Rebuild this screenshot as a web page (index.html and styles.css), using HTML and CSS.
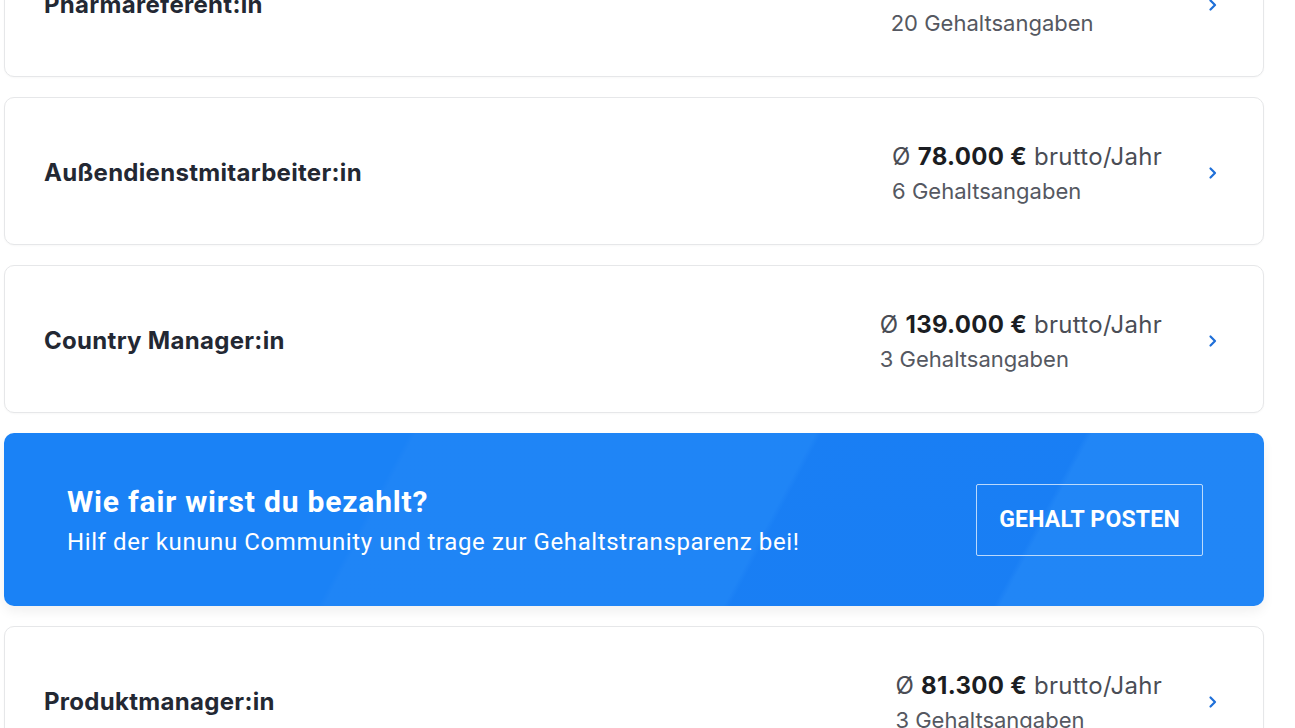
FILE: index.html
```html
<!doctype html>
<html lang="de">
<head>
    <meta charset="UTF-8">
    <meta name="viewport" content="width=device-width, initial-scale=1.0">
    <title>Gehälter</title>
    <link rel="stylesheet" href="styles.css">
</head>
<body>
<div class="list">
    <a class="job" href="#">
        <span class="job-title">Pharmareferent:in</span>
        <span class="stats">
            <span class="price">Ø <b>92.600 €</b> brutto/Jahr</span>
            <span class="count">20 Gehaltsangaben</span>
        </span>
        <span class="chev"><svg width="10" height="14" viewBox="0 0 10 14"><path d="M2.5 2.5 L7 7 L2.5 11.5" fill="none" stroke="#1f6fd8" stroke-width="2.2" stroke-linecap="round" stroke-linejoin="round"/></svg></span>
    </a>
    <a class="job" href="#">
        <span class="job-title">Außendienstmitarbeiter:in</span>
        <span class="stats">
            <span class="price">Ø <b>78.000 €</b> brutto/Jahr</span>
            <span class="count">6 Gehaltsangaben</span>
        </span>
        <span class="chev"><svg width="10" height="14" viewBox="0 0 10 14"><path d="M2.5 2.5 L7 7 L2.5 11.5" fill="none" stroke="#1f6fd8" stroke-width="2.2" stroke-linecap="round" stroke-linejoin="round"/></svg></span>
    </a>
    <a class="job" href="#">
        <span class="job-title">Country Manager:in</span>
        <span class="stats">
            <span class="price">Ø <b>139.000 €</b> brutto/Jahr</span>
            <span class="count">3 Gehaltsangaben</span>
        </span>
        <span class="chev"><svg width="10" height="14" viewBox="0 0 10 14"><path d="M2.5 2.5 L7 7 L2.5 11.5" fill="none" stroke="#1f6fd8" stroke-width="2.2" stroke-linecap="round" stroke-linejoin="round"/></svg></span>
    </a>
    <div class="banner">
        <div class="banner-text">
            <h2>Wie fair wirst du bezahlt?</h2>
            <p>Hilf der kununu Community und trage zur Gehaltstransparenz bei!</p>
        </div>
        <a class="banner-btn" href="#">GEHALT POSTEN</a>
    </div>
    <a class="job" href="#">
        <span class="job-title">Produktmanager:in</span>
        <span class="stats">
            <span class="price">Ø <b>81.300 €</b> brutto/Jahr</span>
            <span class="count">3 Gehaltsangaben</span>
        </span>
        <span class="chev"><svg width="10" height="14" viewBox="0 0 10 14"><path d="M2.5 2.5 L7 7 L2.5 11.5" fill="none" stroke="#1f6fd8" stroke-width="2.2" stroke-linecap="round" stroke-linejoin="round"/></svg></span>
    </a>
</div>
</body>
</html>
```

FILE: styles.css
```css
*{
    margin: 0;
    padding: 0;
    box-sizing: border-box;
}
body{
    background-color: #ffffff;
    font-family: Inter, "Noto Sans", sans-serif;
    overflow: hidden;
}

.list{
    width: 1260px;
    margin: -71px 0 0 4px;
    display: flex;
    flex-direction: column;
    gap: 20px;
}

.job{
    display: flex;
    align-items: center;
    height: 148px;
    padding: 3px 45px 0 39px;
    border: 1px solid #e6e7e9;
    border-radius: 10px;
    background: #fff;
    text-decoration: none;
    box-shadow: 0 1px 2px rgba(0,0,0,0.03);
}
.job-title{
    flex: 1;
    font-size: 24px;
    font-weight: 700;
    color: #232833;
    letter-spacing: 0.3px;
}
.stats{
    display: flex;
    flex-direction: column;
    padding-top: 3px;
}
.price{
    font-size: 24px;
    line-height: 34px;
    color: #4a4d55;
    letter-spacing: 0.3px;
}
.price b{
    color: #1b1d22;
    font-weight: 700;
}
.count{
    font-size: 22px;
    line-height: 34px;
    color: #555861;
}
.chev{
    display: flex;
    margin-left: 46px;
}

.banner{
    display: flex;
    align-items: center;
    justify-content: space-between;
    height: 173px;
    padding: 0 61px 0 63px;
    border-radius: 10px;
    color: #fff;
    font-family: Roboto, "Liberation Sans", sans-serif;
    background:
        linear-gradient(118deg, rgba(255,255,255,0) 0%, rgba(255,255,255,0) 30%, rgba(255,255,255,0.025) 30.5%, rgba(255,255,255,0.025) 60%, rgba(0,40,200,0.04) 60.5%, rgba(0,40,200,0.04) 80%, rgba(255,255,255,0.03) 80.5%),
        #1a82f6;
    box-shadow: 0 6px 12px rgba(0,0,0,0.06);
}
.banner-text h2{
    font-size: 30px;
    font-weight: 700;
    line-height: 40px;
    letter-spacing: 0.8px;
}
.banner-text p{
    font-size: 24px;
    line-height: 30px;
    margin-top: 5px;
    letter-spacing: 0.6px;
}
.banner-btn{
    display: flex;
    align-items: center;
    justify-content: center;
    width: 227px;
    height: 72px;
    border: 1px solid rgba(255,255,255,0.7);
    border-radius: 2px;
    color: #fff;
    text-decoration: none;
    font-size: 23px;
    font-weight: 700;
    letter-spacing: 0.2px;
}
```
